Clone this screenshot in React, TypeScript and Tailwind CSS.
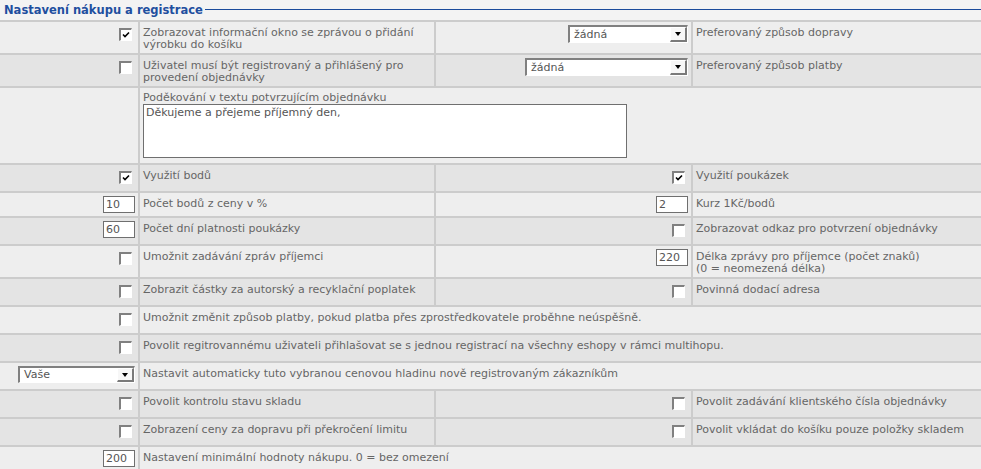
import type { ReactNode } from 'react'

/**
 * Shop settings form: "Nastavení nákupu a registrace"
 * Old-style bordered table, four columns, alternating row tones
 */

function CheckBox({ checked = false }: { checked?: boolean }) {
  return (
    <span className="mt-[3px] mr-[3px] flex h-[13px] w-[13px] shrink-0 items-center justify-center border-t-2 border-l-2 border-r border-b border-t-[#808080] border-l-[#808080] border-r-white border-b-white bg-white">
      {checked && (
        <svg width="8" height="7" viewBox="0 0 8 7" className="-ml-[1px] -mt-[1px]">
          <path d="M1 3.5 L3 5.5 L7 1.5" fill="none" stroke="#000" strokeWidth="1.6" />
        </svg>
      )}
    </span>
  )
}

function TextBox({ value }: { value: string }) {
  return (
    <span className="flex h-[17px] w-[32px] items-center border border-[#6f6f6f] bg-white pl-[2px] text-[11px] text-[#555]">
      {value}
    </span>
  )
}

function Select({ value, width, height }: { value: string; width: string; height: string }) {
  return (
    <span
      className={`flex ${width} ${height} items-stretch border-t-2 border-l-2 border-r border-b border-t-[#808080] border-l-[#808080] border-r-white border-b-white bg-white`}
    >
      <span className="flex flex-1 items-center pl-[4px] text-[#555]">{value}</span>
      <span className="flex w-[17px] items-center justify-center border-t border-l border-t-white border-l-white border-r-2 border-b-2 border-r-[#7a7a7a] border-b-[#7a7a7a] bg-[#f7f7f7]">
        <span className="h-0 w-0 border-x-[3px] border-t-[4px] border-x-transparent border-t-black" />
      </span>
    </span>
  )
}

interface RowProps {
  tone: 'light' | 'dark'
  h: string
  control?: ReactNode
  label: ReactNode
  control2?: ReactNode
  label2?: ReactNode
}

function Row({ tone, h, control, label, control2, label2 }: RowProps) {
  const bg = tone === 'light' ? 'bg-[#eeeeee]' : 'bg-[#e4e4e4]'
  const split = control2 !== undefined || label2 !== undefined

  return (
    <div className={`grid ${h} grid-cols-[138px_294px_255px_1fr] gap-x-[2px] bg-[#cccccc]`}>
      <div className={`flex items-start justify-end p-[3px] ${bg}`}>{control}</div>
      {split ? (
        <>
          <div className={`px-[3px] pt-[5px] ${bg}`}>{label}</div>
          <div className={`flex items-start justify-end p-[3px] ${bg}`}>{control2}</div>
          <div className={`px-[3px] pt-[5px] ${bg}`}>{label2}</div>
        </>
      ) : (
        <div className={`col-span-3 px-[3px] pt-[5px] ${bg}`}>{label}</div>
      )}
    </div>
  )
}

export default function App() {
  return (
    <div className="min-h-screen bg-[#f3f3f3] font-['DejaVu_Sans',Verdana,sans-serif] text-[11px] leading-[12px] text-[#666666]">
      {/* Section heading with rule */}
      <div className="flex h-[20px] items-center pl-[4px]">
        <span className="text-[11.5px] font-bold leading-[14px] text-[#1f4f9f]">Nastavení nákupu a registrace</span>
        <span className="ml-[2px] -mt-[1px] h-[1px] flex-1 bg-[#1a4b9b]" />
      </div>

      <div className="flex flex-col gap-y-[2px] bg-[#cccccc] pt-[2px]">
        <Row
          tone="light"
          h="h-[31px]"
          control={<CheckBox checked />}
          label={
            <>
              Zobrazovat informační okno se zprávou o přidání
              <br />
              výrobku do košíku
            </>
          }
          control2={<Select value="žádná" width="w-[120px]" height="h-[18px]" />}
          label2="Preferovaný způsob dopravy"
        />
        <Row
          tone="dark"
          h="h-[31px]"
          control={<CheckBox />}
          label={
            <>
              Uživatel musí být registrovaný a přihlášený pro
              <br />
              provedení objednávky
            </>
          }
          control2={<Select value="žádná" width="w-[163px]" height="h-[18px]" />}
          label2="Preferovaný způsob platby"
        />
        <Row
          tone="light"
          h="h-[75px]"
          label={
            <div className="-mt-[2px] flex flex-col">
              <span className="h-[13px] pt-[1px]">Poděkování v textu potvrzujícím objednávku</span>
              <span className="h-[54px] w-[484px] border border-[#6f6f6f] bg-white px-[2px] pt-[2px] text-[#555]">
                Děkujeme a přejeme příjemný den,
              </span>
            </div>
          }
        />
        <Row
          tone="dark"
          h="h-[26px]"
          control={<CheckBox checked />}
          label="Využití bodů"
          control2={<CheckBox checked />}
          label2="Využití poukázek"
        />
        <Row
          tone="light"
          h="h-[23px]"
          control={<TextBox value="10" />}
          label="Počet bodů z ceny v %"
          control2={<TextBox value="2" />}
          label2="Kurz 1Kč/bodů"
        />
        <Row
          tone="dark"
          h="h-[26px]"
          control={<TextBox value="60" />}
          label="Počet dní platnosti poukázky"
          control2={<CheckBox />}
          label2="Zobrazovat odkaz pro potvrzení objednávky"
        />
        <Row
          tone="light"
          h="h-[31px]"
          control={<CheckBox />}
          label="Umožnit zadávání zpráv příjemci"
          control2={<TextBox value="220" />}
          label2={
            <>
              Délka zprávy pro příjemce (počet znaků)
              <br />
              (0 = neomezená délka)
            </>
          }
        />
        <Row
          tone="dark"
          h="h-[26px]"
          control={<CheckBox />}
          label="Zobrazit částky za autorský a recyklační poplatek"
          control2={<CheckBox />}
          label2="Povinná dodací adresa"
        />
        <Row
          tone="light"
          h="h-[26px]"
          control={<CheckBox />}
          label="Umožnit změnit způsob platby, pokud platba přes zprostředkovatele proběhne neúspěšně."
        />
        <Row
          tone="dark"
          h="h-[26px]"
          control={<CheckBox />}
          label="Povolit regitrovannému uživateli přihlašovat se s jednou registrací na všechny eshopy v rámci multihopu."
        />
        <Row
          tone="light"
          h="h-[26px]"
          control={<Select value="Vaše" width="w-[117px]" height="h-[17px]" />}
          label="Nastavit automaticky tuto vybranou cenovou hladinu nově registrovaným zákazníkům"
        />
        <Row
          tone="dark"
          h="h-[26px]"
          control={<CheckBox />}
          label="Povolit kontrolu stavu skladu"
          control2={<CheckBox />}
          label2="Povolit zadávání klientského čísla objednávky"
        />
        <Row
          tone="dark"
          h="h-[26px]"
          control={<CheckBox />}
          label="Zobrazení ceny za dopravu při překročení limitu"
          control2={<CheckBox />}
          label2="Povolit vkládat do košíku pouze položky skladem"
        />
        <Row
          tone="light"
          h="h-[30px]"
          control={<TextBox value="200" />}
          label="Nastavení minimální hodnoty nákupu. 0 = bez omezení"
        />
      </div>
    </div>
  )
}
